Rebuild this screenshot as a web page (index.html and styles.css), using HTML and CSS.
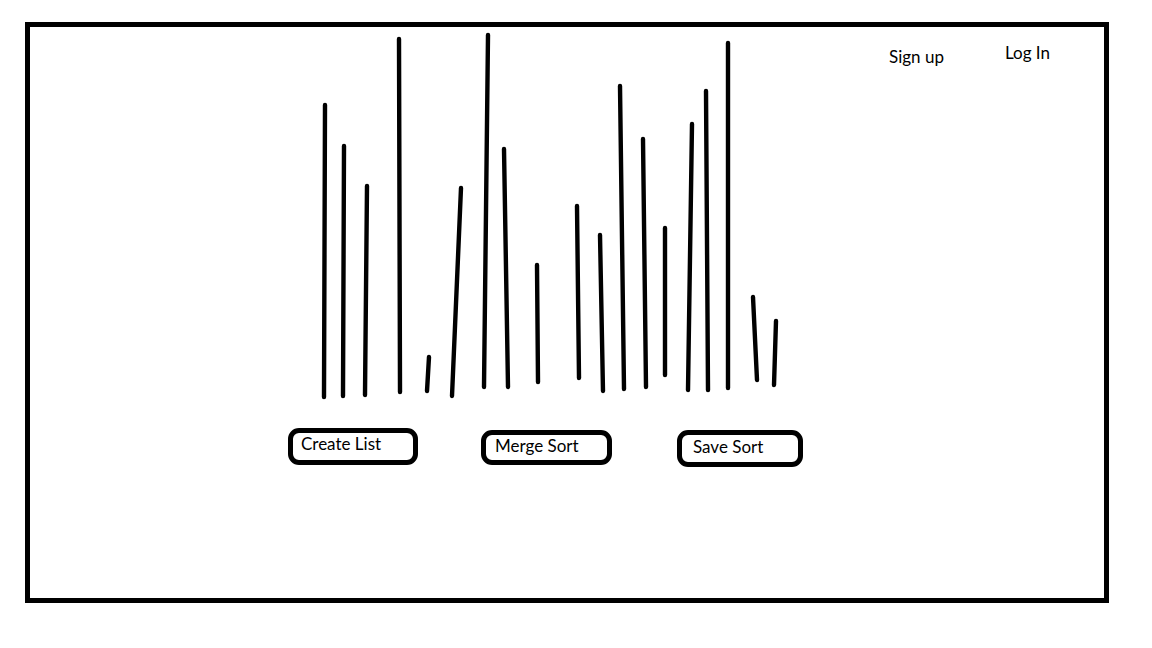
FILE: index.html
```html
<!DOCTYPE html>
<html>
<head>
<meta charset="utf-8">
<link rel="stylesheet" href="styles.css">
</head>
<body>
<div class="frame">
  <div class="top">
    <svg class="chart" width="480" height="370" viewBox="310 30 480 370" fill="none" stroke="#000" stroke-width="4.4" stroke-linecap="round">
      <line x1="325" y1="105" x2="324" y2="397"/>
      <line x1="344" y1="146" x2="343" y2="396"/>
      <line x1="367" y1="186" x2="365" y2="395"/>
      <line x1="399" y1="39" x2="400" y2="392"/>
      <line x1="429" y1="357" x2="427" y2="391"/>
      <line x1="461" y1="188" x2="452" y2="396"/>
      <line x1="488" y1="35" x2="484" y2="387"/>
      <line x1="504" y1="149" x2="508" y2="387"/>
      <line x1="537" y1="265" x2="538" y2="382"/>
      <line x1="577" y1="206" x2="579" y2="378"/>
      <line x1="600" y1="235" x2="603" y2="391"/>
      <line x1="620" y1="86" x2="624" y2="389"/>
      <line x1="643" y1="139" x2="646" y2="387"/>
      <line x1="665" y1="228" x2="665" y2="375"/>
      <line x1="692" y1="124" x2="688" y2="390"/>
      <line x1="706" y1="91" x2="708" y2="390"/>
      <line x1="728" y1="43" x2="728" y2="388"/>
      <line x1="753" y1="297" x2="757" y2="380"/>
      <line x1="776" y1="321" x2="774" y2="385"/>
    </svg>
    <nav class="nav">
      <a class="nav-link nav-signup">Sign up</a>
      <a class="nav-link nav-login">Log In</a>
    </nav>
  </div>
  <div class="actions">
    <button class="btn btn-create">Create List</button>
    <button class="btn btn-merge">Merge Sort</button>
    <button class="btn btn-save">Save Sort</button>
  </div>
</div>
</body>
</html>
```
FILE: styles.css
```css
html, body {
  margin: 0;
  padding: 0;
  background: #fff;
}
body {
  font-family: Lato, "Open Sans", sans-serif;
  color: #000;
}
.frame {
  box-sizing: border-box;
  width: 1084px;
  height: 581px;
  margin: 22px 0 0 25px;
  border: 5px solid #000;
}
.top {
  display: flex;
  align-items: flex-start;
}
.chart {
  display: block;
  margin: 3px 0 0 280px;
  flex: none;
}
.nav {
  display: flex;
  align-items: flex-start;
  gap: 61px;
  margin: 16px 0 0 99px;
}
.nav-link {
  font-size: 17px;
  line-height: 20px;
  color: #000;
  text-decoration: none;
  cursor: pointer;
}
.nav-signup {
  margin-top: 4px;
}
.actions {
  display: flex;
  align-items: flex-start;
  margin: 0 0 0 258px;
}
.btn {
  box-sizing: border-box;
  border: 5px solid #000;
  border-radius: 11px;
  background: #fff;
  font-family: Lato, "Open Sans", sans-serif;
  font-size: 17px;
  line-height: 20px;
  color: #000;
  text-align: left;
  padding: 0;
  cursor: pointer;
}
.btn-create {
  width: 130px;
  height: 37px;
  margin-top: 28px;
  padding: 0 0 6px 8px;
}
.btn-merge {
  width: 131px;
  height: 35px;
  margin: 30px 0 0 63px;
  padding: 0 0 4px 9px;
}
.btn-save {
  width: 126px;
  height: 37px;
  margin: 30px 0 0 65px;
  padding: 0 0 4px 11px;
}
```
